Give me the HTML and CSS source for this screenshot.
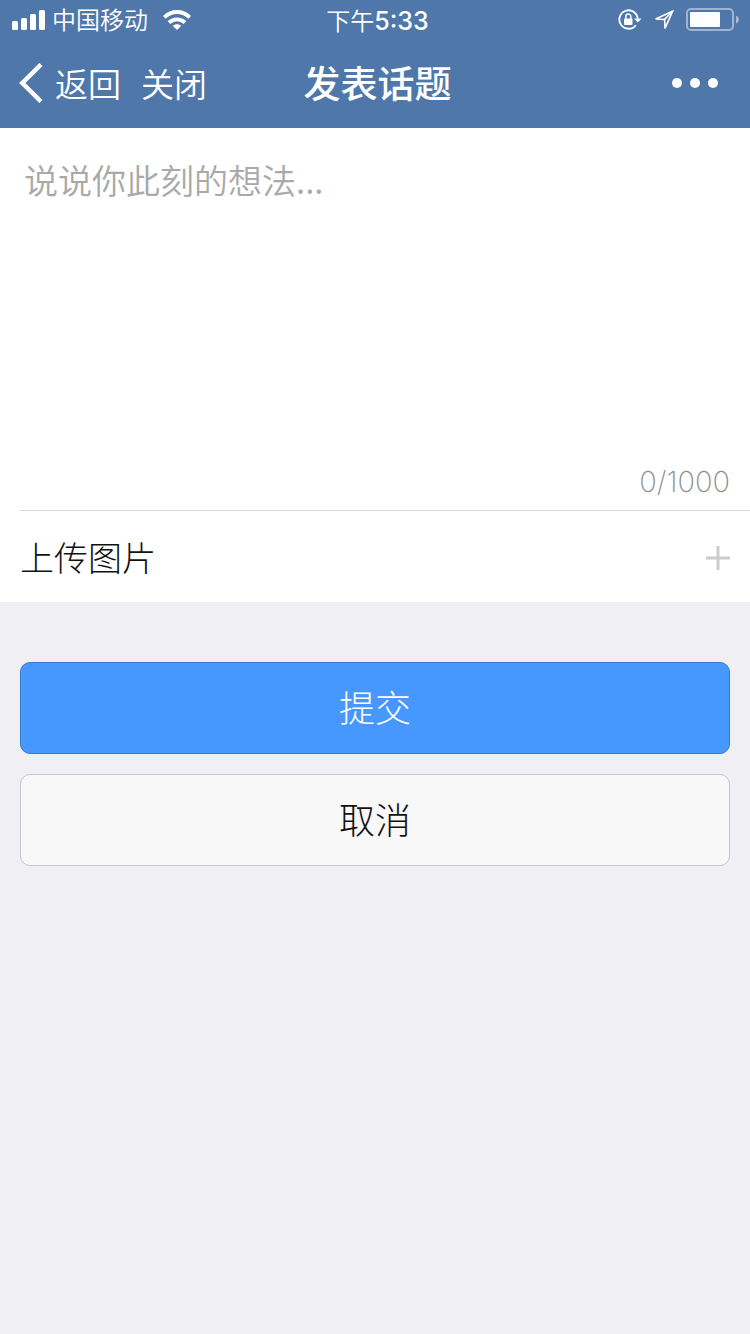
FILE: index.html
```html
<!DOCTYPE html>
<html lang="zh-CN">
<head>
<meta charset="utf-8">
<meta name="viewport" content="width=device-width, initial-scale=1">
<title>发表话题</title>
<link rel="stylesheet" href="styles.css">
</head>
<body>
<header class="header">
  <div class="status">
    <div class="status-left">
      <svg class="signal" width="34" height="20" viewBox="0 0 34 20" fill="#fff" aria-hidden="true">
        <rect x="0" y="11" width="6" height="9" rx="1.5"/>
        <rect x="9" y="8" width="6" height="12" rx="1.5"/>
        <rect x="18" y="4" width="6" height="16" rx="1.5"/>
        <rect x="27" y="0" width="6" height="20" rx="1.5"/>
      </svg>
      <span class="carrier">中国移动</span>
      <svg class="wifi" width="28" height="20" viewBox="0 0 28 20" fill="none" stroke="#fff" stroke-width="3.8" aria-hidden="true">
        <path d="M1.3 7.300C8.500.2 19.500.2 26.700 7.300"/>
        <path d="M6 12.600c4.500-4.300 11.500-4.300 16 0"/>
        <path d="M14 20l-4.300-4.200c2.400-2.100 6.200-2.100 8.600 0z" fill="#fff" stroke="none"/>
      </svg>
    </div>
    <time class="clock">下午<span class="digits">5:33</span></time>
    <div class="status-right">
      <svg width="24" height="22" viewBox="0 0 24 22" fill="none" stroke="#fff" stroke-width="1.8" aria-hidden="true">
        <path d="M17.800 16.200A9.200 9.200 0 1 1 19.700 9.500"/>
        <path d="M16 9.500h7.500l-3.700 4z" fill="#fff" stroke="none"/>
        <rect x="6" y="9.500" width="8.500" height="6.500" rx="1" fill="#fff" stroke="none"/>
        <path d="M7.800 10V7.500a2.500 2.500 0 0 1 5 0V10" stroke-width="1.500"/>
      </svg>
      <svg class="location" width="20" height="20" viewBox="0 0 20 20" fill="none" stroke="#fff" stroke-width="1.600" aria-hidden="true">
        <path d="M18.600 1.300L1.600 9l9 .4.400 9z"/>
        <path d="M10.600 9.400L18.600 1.300"/>
      </svg>
      <svg class="battery" width="54" height="24" viewBox="0 0 54 24" fill="none" aria-hidden="true">
        <rect x="1" y="1" width="46" height="21" rx="4" stroke="#fff" stroke-opacity=".45" stroke-width="2"/>
        <rect x="4" y="4" width="30" height="15" rx="1" fill="#fff"/>
        <path d="M50 7.500q3 1.500 3 4t-3 4z" fill="#fff" fill-opacity=".5"/>
      </svg>
    </div>
  </div>
  <nav class="nav">
    <div class="nav-left">
      <button class="nav-button" type="button">
        <svg width="24" height="40" viewBox="0 0 24 40" fill="none" stroke="#fff" stroke-width="4.500" aria-hidden="true">
          <path d="M22 1.500L3.300 20 22 38.500"/>
        </svg>
        <span class="nav-text">返回</span>
      </button>
      <button class="nav-button" type="button"><span class="nav-text">关闭</span></button>
    </div>
    <h1 class="title">发表话题</h1>
    <button class="more" type="button" aria-label="更多">
      <svg width="46" height="10" viewBox="0 0 46 10" fill="#fff" aria-hidden="true">
        <circle cx="5" cy="5" r="5"/><circle cx="23" cy="5" r="5"/><circle cx="41" cy="5" r="5"/>
      </svg>
    </button>
  </nav>
</header>
<main>
  <form>
    <section class="panel">
      <div class="compose">
        <textarea class="topic" maxlength="1000" aria-label="话题内容" placeholder="说说你此刻的想法..."></textarea>
        <div class="counter">0/1000</div>
      </div>
      <div class="upload">
        <span class="upload-label" id="upload-label">上传图片</span>
        <button class="add" type="button" aria-labelledby="upload-label">
          <svg width="24" height="24" viewBox="0 0 24 24" stroke="#ccc" stroke-width="3" aria-hidden="true">
            <path d="M0 12h24M12 0v24"/>
          </svg>
        </button>
      </div>
    </section>
    <div class="actions">
      <button class="action submit" type="submit">提交</button>
      <button class="action cancel" type="button">取消</button>
    </div>
  </form>
</main>
</body>
</html>
```

FILE: styles.css
```css
* {
  box-sizing: border-box;
}

body {
  margin: 0;
  min-height: 100vh;
  background: #efeff4;
  color: #111;
  font-family: "Inter", "Noto Sans CJK SC", sans-serif;
}

button,
textarea {
  margin: 0;
  padding: 0;
  border: 0;
  background: none;
  color: inherit;
  font: inherit;
}

svg {
  display: block;
  flex: none;
}

.header {
  background: #4f77aa;
  color: #fff;
}

.status,
.nav {
  display: grid;
  grid-template-columns: 1fr auto 1fr;
  align-items: center;
}

.status {
  height: 40px;
  padding: 0 10px 0 12px;
  font-size: 24px;
  line-height: 36px;
}

.status-left,
.status-right {
  display: flex;
  align-items: center;
}

.status-left {
  gap: 6px;
}

.carrier,
.clock {
  padding-top: 2px;
  font-weight: 350;
}

.clock {
  padding-left: 3px;
}

.wifi {
  margin-left: 9px;
}

.digits {
  font-size: 25px;
  font-weight: 500;
}

.status-right {
  justify-content: flex-end;
  gap: 12px;
}

.nav {
  height: 88px;
  padding: 0 32px 2px 19px;
}

.nav-left {
  display: flex;
  gap: 20px;
}

.nav-button {
  display: flex;
  align-items: center;
  gap: 12px;
  font-size: 33px;
  font-weight: 350;
  line-height: 48px;
}

.nav-text {
  padding-top: 4px;
}

.title {
  margin: 0;
  padding: 4px 0 0 18px;
  font-size: 37px;
  font-weight: 500;
  line-height: 56px;
}

.more {
  justify-self: end;
}

.panel {
  padding-left: 20px;
  background: #fff;
}

.compose {
  border-bottom: 1px solid #d9d9d9;
}

.topic {
  display: block;
  width: 100%;
  height: 332px;
  padding: 28px 20px 0 4px;
  outline: 0;
  resize: none;
  font-family: "Noto Sans CJK SC", sans-serif;
  font-size: 34px;
  font-weight: 350;
  line-height: 48px;
}

.topic::placeholder {
  color: #a9a9a9;
  opacity: 1;
}

.counter {
  padding: 0 20px 6px 0;
  color: #8e8e8e;
  font-size: 29px;
  font-weight: 200;
  line-height: 44px;
  text-align: right;
}

.upload {
  display: flex;
  align-items: center;
  justify-content: space-between;
  padding: 22px 20px 19px 0;
  font-size: 34px;
  font-weight: 300;
  line-height: 48px;
}

.upload-label {
  padding-top: 2px;
}

.actions {
  display: grid;
  gap: 20px;
  padding: 60px 20px;
}

.action {
  height: 92px;
  padding-top: 2px;
  border: 1px solid;
  border-radius: 10px;
  font-size: 36px;
  font-weight: 300;
  line-height: 48px;
}

.submit {
  border-color: #3a7acc;
  background: #4698ff;
  color: #fff;
}

.cancel {
  border-color: #c6c6ca;
  background: #f8f8f8;
}
```
